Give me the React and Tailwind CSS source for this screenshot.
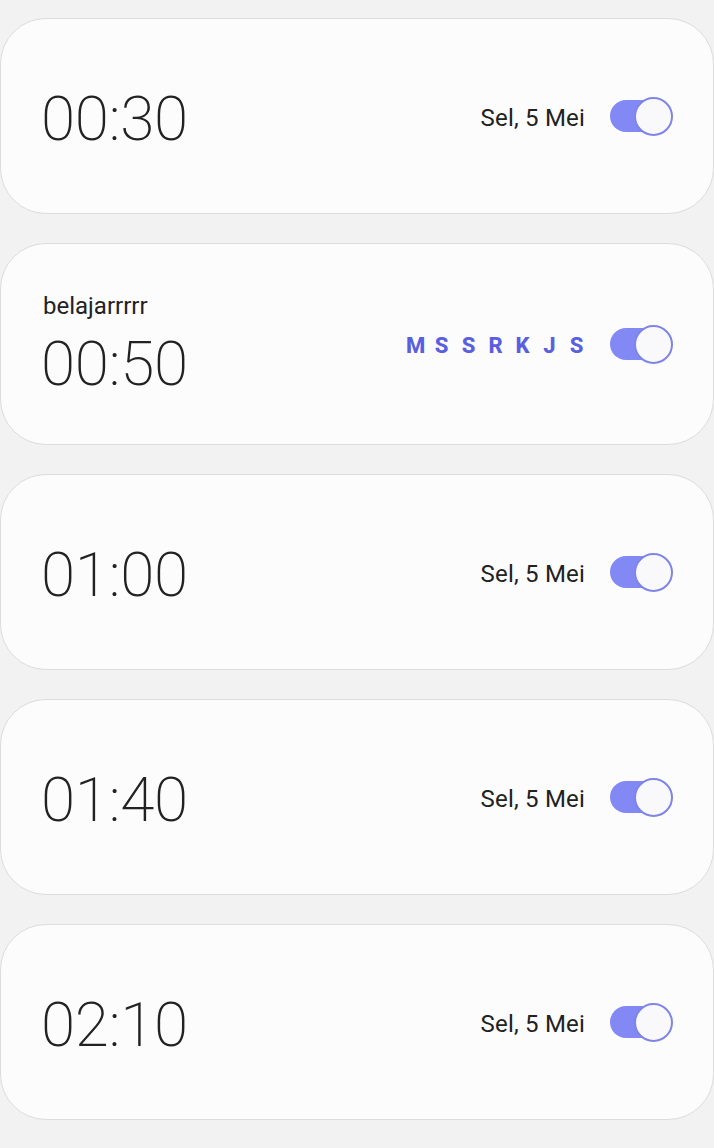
const alarms = [
  { time: '00:30', date: 'Sel, 5 Mei' },
  { time: '00:50', label: 'belajarrrrr', days: ['M', 'S', 'S', 'R', 'K', 'J', 'S'] },
  { time: '01:00', date: 'Sel, 5 Mei' },
  { time: '01:40', date: 'Sel, 5 Mei' },
  { time: '02:10', date: 'Sel, 5 Mei' },
]

function Toggle() {
  return (
    <div className="relative w-[63px] h-[39px] shrink-0">
      <div className="absolute left-0 top-[3px] w-[50px] h-[32px] rounded-full bg-[#8288f4]" />
      <div className="absolute right-0 top-0 w-[39px] h-[39px] rounded-full bg-[#f9f9fb] border-2 border-[#7f85e6]" />
    </div>
  )
}

function AlarmCard({ alarm }) {
  return (
    <div
      className={`flex items-center justify-between bg-[#fcfcfc] border border-[#dcdcdc] rounded-[46px] pl-[40px] pr-[40px] ${
        alarm.label ? 'h-[202px]' : 'h-[196px]'
      }`}
    >
      <div className={`flex flex-col ${alarm.label ? 'mt-[1px]' : 'mt-[5px]'}`}>
        {alarm.label && (
          <span className="text-[24px] leading-[26px] text-[#222] mb-[13px] pl-[2px]">{alarm.label}</span>
        )}
        <span className="text-[62px] leading-[64px] font-extralight text-[#222] tracking-[-0.3px]">
          {alarm.time}
        </span>
      </div>
      <div className="flex items-center gap-[25px]">
        {alarm.days ? (
          <div className="flex items-center gap-[10px] text-[22px] font-extrabold text-[#5a5fdf] mt-[2px]">
            {alarm.days.map((d, i) => (
              <span key={i} className="w-[17px] text-center">{d}</span>
            ))}
          </div>
        ) : (
          <span className="text-[24px] text-[#222] tracking-[0.2px] mt-[3px]">{alarm.date}</span>
        )}
        <Toggle />
      </div>
    </div>
  )
}

export default function App() {
  return (
    <div
      className="min-h-[1148px] bg-[#f2f2f2] pt-[18px] flex flex-col gap-[29px]"
      style={{ fontFamily: 'Roboto, "Noto Sans", sans-serif' }}
    >
      {alarms.map((a) => (
        <AlarmCard key={a.time} alarm={a} />
      ))}
    </div>
  )
}
